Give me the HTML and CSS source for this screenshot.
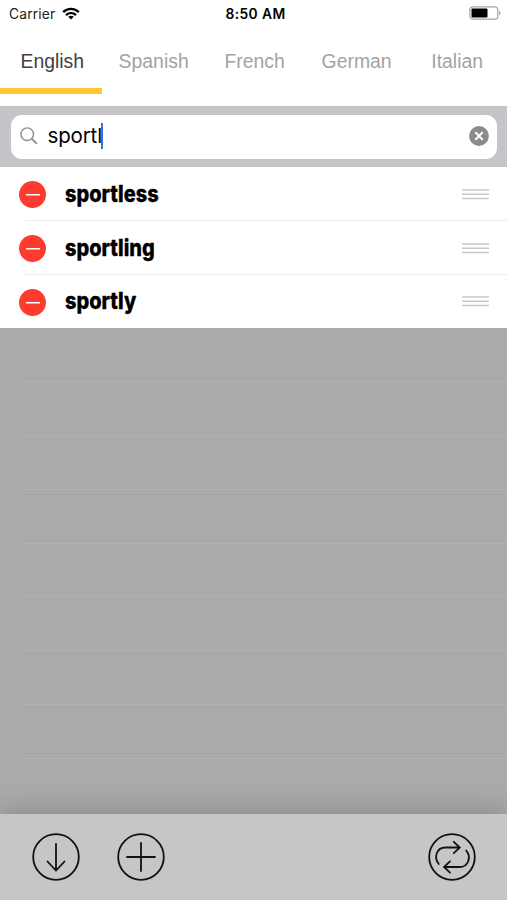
FILE: index.html
```html
<!DOCTYPE html>
<html lang="en">
<head>
<meta charset="utf-8">
<title>Dictionary</title>
<link rel="stylesheet" href="styles.css">
</head>
<body>
<div class="app">
  <header class="status">
    <div class="carrier"><span>Carrier</span>
      <svg width="18" height="13" viewBox="0 0 18 13" fill="none" stroke="#000" stroke-width="2.4"><path d="M1.2 5.1C5.6.8 12.4.8 16.8 5.1M4 8.1c2.900-2.700 7.100-2.700 10 0"/><path d="M9 12.600 6.200 9.800c1.600-1.300 4-1.300 5.600 0z" fill="#000" stroke="none"/></svg>
    </div>
    <div class="time">8:50 AM</div>
    <svg class="battery" width="32" height="14" viewBox="0 0 32 14"><rect x=".8" y=".8" width="28" height="12.400" rx="3.300" fill="#fff" stroke="#a5a5a5" stroke-width="1.200"/><rect x="2.500" y="2.500" width="16" height="9" rx="1" fill="#000"/><path d="M30.200 4.800c1.700.7 1.700 3.700 0 4.400z" fill="#999"/></svg>
  </header>
  <nav class="tabs">
    <a class="tab active"><span class="label">English</span></a>
    <a class="tab"><span class="label">Spanish</span></a>
    <a class="tab"><span class="label">French</span></a>
    <a class="tab"><span class="label">German</span></a>
    <a class="tab"><span class="label">Italian</span></a>
  </nav>
  <section class="search">
    <div class="field">
      <svg width="18" height="18" viewBox="0 0 18 18" fill="none" stroke="#8e8e93" stroke-width="1.400"><circle cx="7.200" cy="7.200" r="6.300"/><path d="m11.700 11.700 5.200 5.200" stroke-width="1.900"/></svg>
      <span class="query">sportl</span><i class="caret"></i>
      <svg class="clear" width="20" height="20" viewBox="0 0 20 20"><circle cx="10" cy="10" r="9.900" fill="#8b8b8d"/><path d="m6.300 6.300 7.400 7.400m0-7.400-7.400 7.400" stroke="#fff" stroke-width="2"/></svg>
    </div>
  </section>
  <main class="list">
    <div class="row"><i class="remove"></i><b class="word">sportless</b><svg class="handle" width="27" height="11" viewBox="0 0 27 11"><path d="M0 1h27M0 5.300h27M0 9.600h27"/></svg></div>
    <div class="row"><i class="remove"></i><b class="word">sportling</b><svg class="handle" width="27" height="11" viewBox="0 0 27 11"><path d="M0 1h27M0 5.300h27M0 9.600h27"/></svg></div>
    <div class="row"><i class="remove"></i><b class="word">sportly</b><svg class="handle" width="27" height="11" viewBox="0 0 27 11"><path d="M0 1h27M0 5.300h27M0 9.600h27"/></svg></div>
    <div class="row empty"></div>
    <div class="row empty"></div>
    <div class="row empty"></div>
    <div class="row empty"></div>
    <div class="row empty"></div>
    <div class="row empty"></div>
    <div class="row empty"></div>
    <div class="row empty"></div>
  </main>
  <footer class="toolbar">
    <svg width="48" height="48" viewBox="0 0 48 48"><circle cx="24" cy="24" r="22.800"/><path d="M24 10.800v26.700M15.500 28.500l8.500 9 8.500-9"/></svg>
    <svg width="48" height="48" viewBox="0 0 48 48"><circle cx="24" cy="24" r="22.800"/><path d="M24 10v28M10 24h28"/></svg>
    <svg class="swap" width="48" height="48" viewBox="0 0 48 48"><circle cx="24" cy="24" r="22.800"/><path d="M10.800 31C5.500 24.500 8.500 14.500 17.500 14.500H31.500M25.800 8.800l6 5.700-6 5.700M38.200 17.500C43.500 24 40.500 34 31.500 34H16.500M22 28.300l-6 5.700 6 5.700"/></svg>
  </footer>
</div>
</body>
</html>
```
FILE: styles.css
```css
* { box-sizing: border-box; }
body { margin: 0; background: #fff; font-family: Inter, sans-serif; color: #000; }
.app { width: 507px; height: 900px; overflow: hidden; display: flex; flex-direction: column; }
.status { height: 27px; flex: none; display: grid; grid-template-columns: 1fr auto 1fr; align-items: center; padding: 0 6px 0 9px; font-size: 13.800px; letter-spacing: .15px; }
.carrier { display: flex; align-items: center; gap: 7px; color: #222; }
.carrier svg { margin-top: -1px; }
.time { font-weight: 600; font-size: 13.800px; letter-spacing: .4px; padding-left: 1px; }
.battery { justify-self: end; margin-top: -1px; }
.tabs { height: 79px; flex: none; display: flex; }
.tab { flex: 0 0 101.300px; height: 67px; padding: 22px 0 0 3px; text-align: center; font: 20px/24px "Liberation Sans", sans-serif; color: #a3a3a3; }
.tab .label { display: inline-block; transform: translateX(-.5px) scaleX(.97); }
.tab.active { flex-basis: 102px; color: #404040; border-bottom: 6px solid #fdc82f; }
.search { height: 61px; flex: none; background: #c5c5c9; padding: 7.500px 10px 9px 11px; border-top: 1px solid #bfbfc1; }
.field { height: 44px; background: #fff; border-radius: 11px; display: flex; align-items: center; padding: 0 8px 0 9px; }
.field svg { margin-top: -1px; }
.query { margin: -1px 0 0 9.500px; font-size: 20.500px; letter-spacing: -.15px; line-height: 26px; }
.caret { width: 2.500px; height: 26px; background: #3f68dd; margin: -2px 0 0 -1px; }
.field .clear { margin-left: auto; }
.list { flex: none; height: 647px; overflow: hidden; background: #aaa; }
.row { height: 53.800px; background: #fff linear-gradient(#ececec, #ececec) 25px 100% / 100% 1px no-repeat; display: flex; align-items: center; padding: 2px 18px 0 19px; }
.row:nth-child(3) { background: #fff; }
.row.empty { background: #aaa linear-gradient(#b3b3b3, #b3b3b3) 24px 100% / 100% 1px no-repeat; }
.remove { width: 27px; height: 27px; flex: none; border-radius: 50%; background: linear-gradient(#fff, #fff) center / 14px 1.500px no-repeat #ff3b30; }
.word { margin: -2px 0 0 19px; font-weight: 800; font-size: 23px; line-height: 28px; letter-spacing: 0; transform: scaleX(.868); transform-origin: left; -webkit-text-stroke: .3px #000; }
.handle { margin: -1px 0 0 auto; stroke: #c7c7ca; stroke-width: 1.500; }
.toolbar { height: 86px; flex: none; position: relative; background: #c6c6c6; box-shadow: 0 0 30px rgba(0, 0, 0, .25); display: flex; align-items: center; gap: 37.500px; padding: 0 31.300px 0 31.700px; }
.toolbar svg { fill: none; stroke: #111; stroke-width: 1.800; stroke-linecap: round; }
.toolbar .swap { margin-left: auto; }
```
